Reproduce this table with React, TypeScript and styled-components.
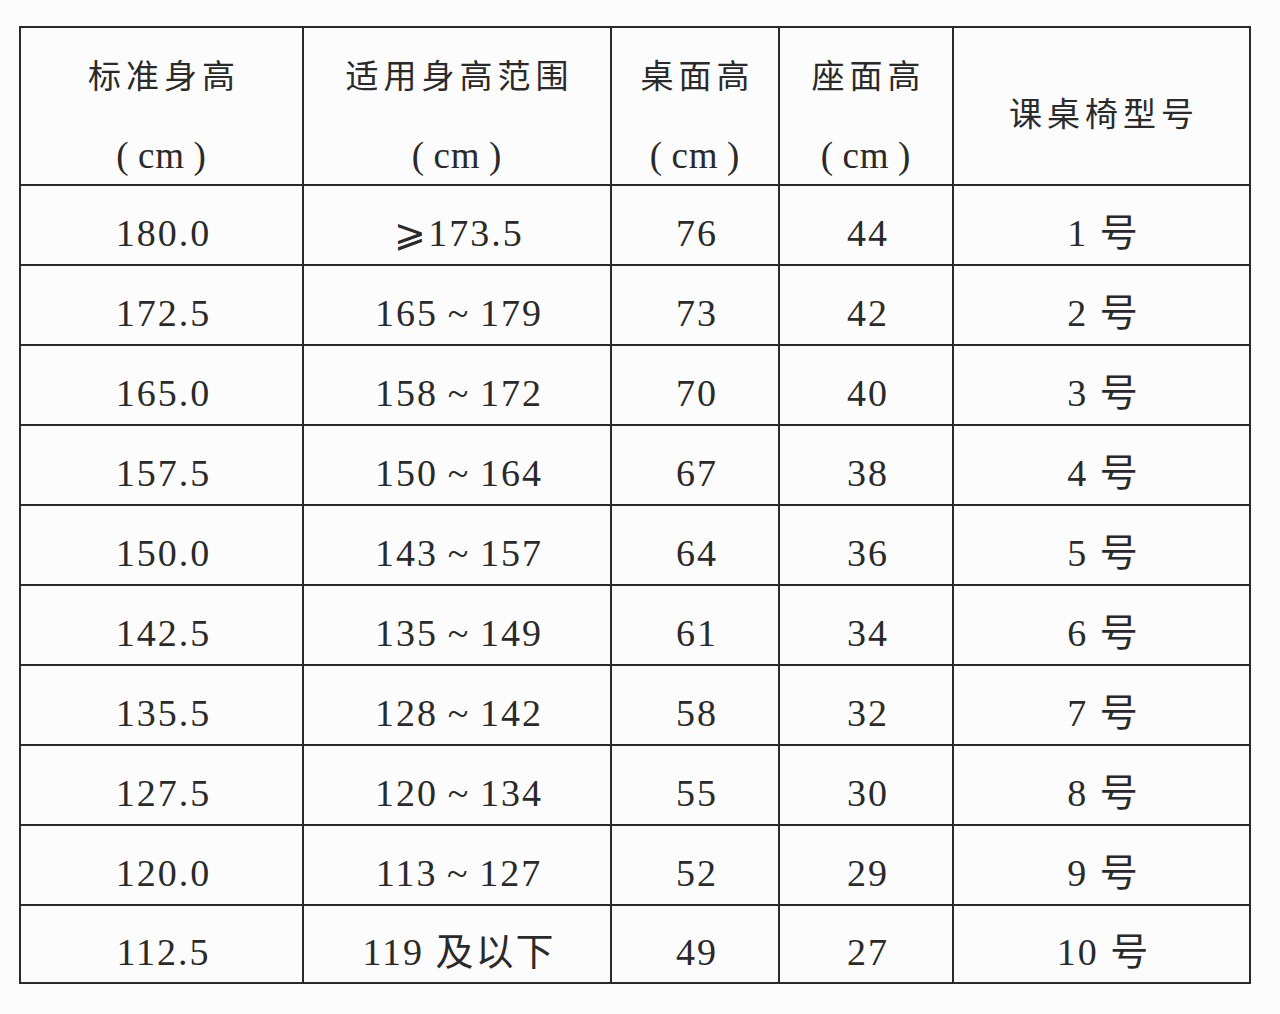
import styled, { createGlobalStyle } from 'styled-components';

const rows = [
  ['180.0', '⩾173.5', '76', '44', '1 号'],
  ['172.5', '165\u2009~\u2009179', '73', '42', '2 号'],
  ['165.0', '158\u2009~\u2009172', '70', '40', '3 号'],
  ['157.5', '150\u2009~\u2009164', '67', '38', '4 号'],
  ['150.0', '143\u2009~\u2009157', '64', '36', '5 号'],
  ['142.5', '135\u2009~\u2009149', '61', '34', '6 号'],
  ['135.5', '128\u2009~\u2009142', '58', '32', '7 号'],
  ['127.5', '120\u2009~\u2009134', '55', '30', '8 号'],
  ['120.0', '113\u2009~\u2009127', '52', '29', '9 号'],
  ['112.5', '119 及以下', '49', '27', '10 号'],
];

const unit = '(\u2009cm\u2009)';

const GlobalStyle = createGlobalStyle`
  html, body {
    margin: 0;
    padding: 0;
    background: #fcfcfc;
  }
`;

const App = () => {
  return (
    <>
      <GlobalStyle />
      <Page>
        <Table>
          <colgroup>
            <col style={{ width: 283 }} />
            <col style={{ width: 308 }} />
            <col style={{ width: 168 }} />
            <col style={{ width: 174 }} />
            <col style={{ width: 297 }} />
          </colgroup>
          <thead>
            <tr>
              <HeadCell>
                <HeadTitle>标准身高</HeadTitle>
                <Unit>{unit}</Unit>
              </HeadCell>
              <HeadCell>
                <HeadTitle>适用身高范围</HeadTitle>
                <Unit>{unit}</Unit>
              </HeadCell>
              <HeadCell>
                <HeadTitle>桌面高</HeadTitle>
                <Unit>{unit}</Unit>
              </HeadCell>
              <HeadCell>
                <HeadTitle>座面高</HeadTitle>
                <Unit>{unit}</Unit>
              </HeadCell>
              <HeadCell>
                <HeadTitle $single>课桌椅型号</HeadTitle>
              </HeadCell>
            </tr>
          </thead>
          <tbody>
            {rows.map((row, i) => (
              <Row key={i} $last={i === rows.length - 1}>
                {row.map((value, j) => (
                  <Cell key={j}>{value}</Cell>
                ))}
              </Row>
            ))}
          </tbody>
        </Table>
      </Page>
    </>
  );
};

export default App;

// Styled Components
const Page = styled.div`
  padding: 26px 0 0 19px;
  height: 1014px;
  box-sizing: border-box;
`;

const Table = styled.table`
  width: 1232px;
  border-collapse: collapse;
  table-layout: fixed;
  border: 2px solid #2a2a2a;
  color: #222;
`;

const HeadCell = styled.th`
  height: 158px;
  padding: 16px 0 0;
  box-sizing: border-box;
  border: 2px solid #2a2a2a;
  font-weight: normal;
  text-align: center;
  vertical-align: middle;
`;

const HeadTitle = styled.div<{ $single?: boolean }>`
  font-family: 'Noto Sans CJK SC', sans-serif;
  font-size: 33px;
  letter-spacing: 5px;
  color: #2a2a2a;
  line-height: 1;
  margin-top: ${({ $single }) => ($single ? '-4px' : '4px')};
  padding-left: 5px;
`;

const Unit = styled.div`
  margin-top: 46px;
  font-family: 'Liberation Serif', 'Noto Sans CJK SC', serif;
  font-size: 37px;
  line-height: 1;
  letter-spacing: 1px;
  color: #2a2a2a;
`;

const Row = styled.tr<{ $last?: boolean }>`
  height: ${({ $last }) => ($last ? '78px' : '80px')};
`;

const Cell = styled.td`
  padding: 16px 0 0 4px;
  border: 2px solid #2a2a2a;
  text-align: center;
  vertical-align: middle;
  font-family: 'Liberation Serif', 'Noto Sans CJK SC', serif;
  font-size: 38px;
  letter-spacing: 2px;
  color: #2a2a2a;
  line-height: 1;
`;
